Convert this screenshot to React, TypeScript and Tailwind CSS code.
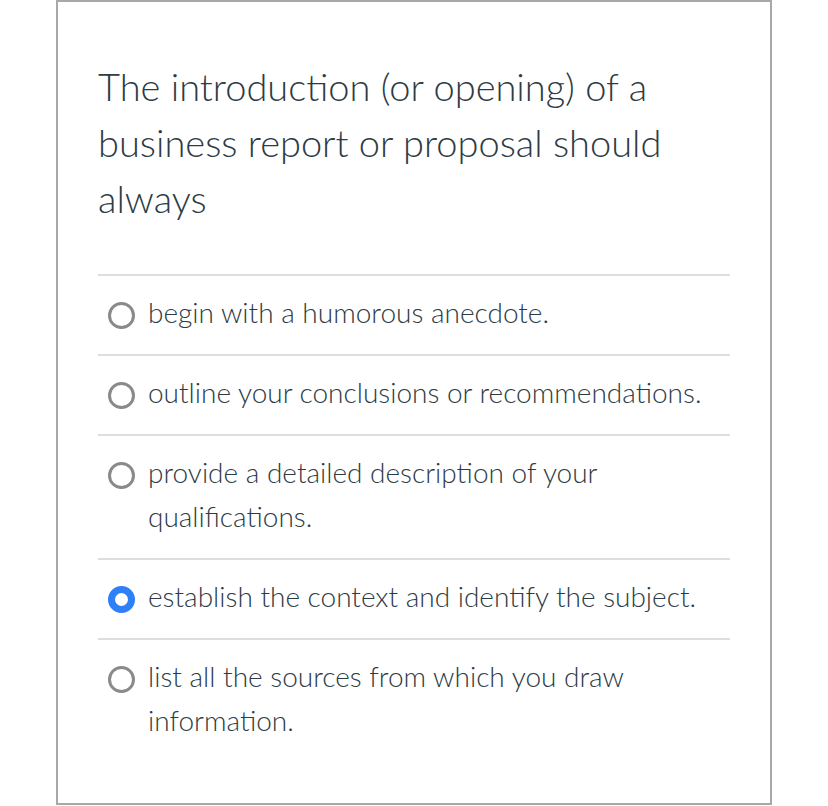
const options = [
  { text: 'begin with a humorous anecdote.', checked: false },
  { text: 'outline your conclusions or recommendations.', checked: false },
  { text: 'provide a detailed description of your qualifications.', checked: false },
  { text: 'establish the context and identify the subject.', checked: true },
  { text: 'list all the sources from which you draw information.', checked: false },
]

function Radio({ checked }: { checked: boolean }) {
  if (checked) {
    return <span className="mt-[12px] block h-[27px] w-[27px] shrink-0 rounded-full border-[7px] border-[#2f7ff7] bg-white" />
  }
  return <span className="mt-[12px] block h-[27px] w-[27px] shrink-0 rounded-full border-[3px] border-[#8a8a8a] bg-white" />
}

export default function App() {
  return (
    <div className="min-h-screen bg-white font-['Lato','Liberation_Sans',sans-serif]">
      <div className="ml-[56px] h-[805px] w-[716px] border-2 border-[#a8a8a8] px-[40px] pt-[56px] text-[#2d3b45]">
        <p className="text-[38px] font-light leading-[56px]">
          The introduction (or opening) of a business report or proposal should always
        </p>
        <div className="mt-[48px] border-t-2 border-[#dddddd]">
          {options.map((o, i) => (
            <label
              key={i}
              className="flex items-start gap-[13px] border-b-2 border-[#dddddd] pt-[14px] pb-[20px] pl-[10px] last:border-b-0"
            >
              <Radio checked={o.checked} />
              <span className="text-[28px] font-light leading-[44px]">{o.text}</span>
            </label>
          ))}
        </div>
      </div>
    </div>
  )
}
